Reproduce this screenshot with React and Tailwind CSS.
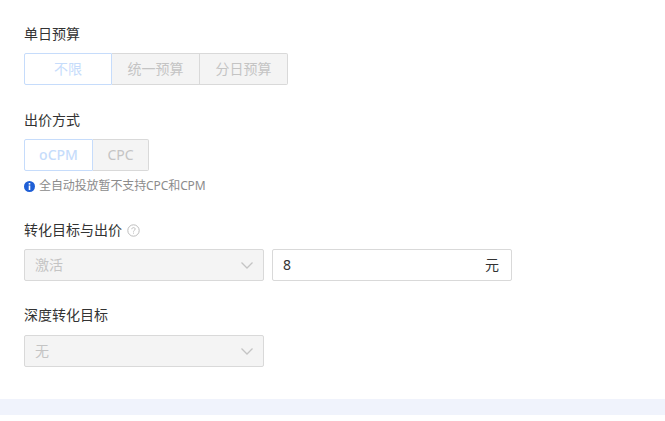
import React from "react";

const font = { fontFamily: '"Noto Sans", "Noto Sans CJK SC", sans-serif' };

function Chevron() {
  return (
    <svg width="12" height="7" viewBox="0 0 12 7" fill="none" stroke="#c4c4c4" strokeWidth="1.3">
      <path d="M0.5 0.5L6 6L11.5 0.5" />
    </svg>
  );
}

function Label({ children }) {
  return <div className="h-[18px] text-sm leading-[18px] text-[#333]">{children}</div>;
}

function Select({ value }) {
  return (
    <div className="w-[240px] h-8 flex items-center justify-between pl-[10px] pr-[10px] bg-[#f4f4f4] border border-[#d9d9d9] rounded-[2px] text-sm text-[#c4c4c4]">
      <span>{value}</span>
      <Chevron />
    </div>
  );
}

function Tab({ children, active, className }) {
  return (
    <div
      className={
        active
          ? "h-8 flex items-center justify-center bg-white border border-[#c6dcfb] text-sm text-[#c6dcfb] " + className
          : "h-8 flex items-center justify-center bg-[#f4f4f4] border border-[#d9d9d9] border-l-0 text-sm text-[#c4c4c4] " + className
      }
    >
      {children}
    </div>
  );
}

export default function App() {
  return (
    <div className="w-[665px] h-[421px] bg-white overflow-hidden flex flex-col" style={font}>
      <div className="h-[399px] pl-6 pt-[25px]">
        <Label>单日预算</Label>
        <div className="flex mt-[10px]">
          <Tab active className="w-[88px] rounded-l-[2px]">不限</Tab>
          <Tab className="w-[88px]">统一预算</Tab>
          <Tab className="w-[88px] rounded-r-[2px]">分日预算</Tab>
        </div>
        <div className="mt-[26px]">
          <Label>出价方式</Label>
        </div>
        <div className="flex mt-[10px]">
          <Tab active className="w-[69px] rounded-l-[2px] font-medium">oCPM</Tab>
          <Tab className="w-[56px] rounded-r-[2px]">CPC</Tab>
        </div>
        <div className="flex items-center gap-1 mt-[7px] h-[16px] text-xs text-[#8c8c8c]">
          <svg width="11" height="11" viewBox="0 0 11 11">
            <circle cx="5.5" cy="5.5" r="5.5" fill="#1f5fd6" />
            <rect x="4.7" y="2" width="1.6" height="1.6" fill="#fff" />
            <rect x="4.7" y="4.5" width="1.6" height="4.5" fill="#fff" />
          </svg>
          <span className="tracking-[-0.1px]">全自动投放暂不支持CPC和CPM</span>
        </div>
        <div className="flex items-center gap-[5px] mt-[27px]">
          <Label>转化目标与出价</Label>
          <svg width="13" height="13" viewBox="0 0 13 13" fill="none">
            <circle cx="6.5" cy="6.5" r="5.7" stroke="#bdbdbd" />
            <path d="M4.8 5.2C4.8 4.2 5.6 3.6 6.5 3.6C7.4 3.6 8.2 4.2 8.2 5.1C8.2 6.2 6.5 6.3 6.5 7.6" stroke="#bdbdbd" />
            <rect x="6" y="8.6" width="1" height="1" fill="#bdbdbd" />
          </svg>
        </div>
        <div className="flex gap-2 mt-[10px]">
          <Select value="激活" />
          <div className="w-[240px] h-8 flex items-center justify-between pl-[10px] pr-3 bg-white border border-[#d9d9d9] rounded-[2px] text-sm text-[#333]">
            <span>8</span>
            <span>元</span>
          </div>
        </div>
        <div className="mt-[25px]">
          <Label>深度转化目标</Label>
        </div>
        <div className="mt-[11px]">
          <Select value="无" />
        </div>
      </div>
      <div className="h-4 bg-[#f0f3fc]" />
    </div>
  );
}
